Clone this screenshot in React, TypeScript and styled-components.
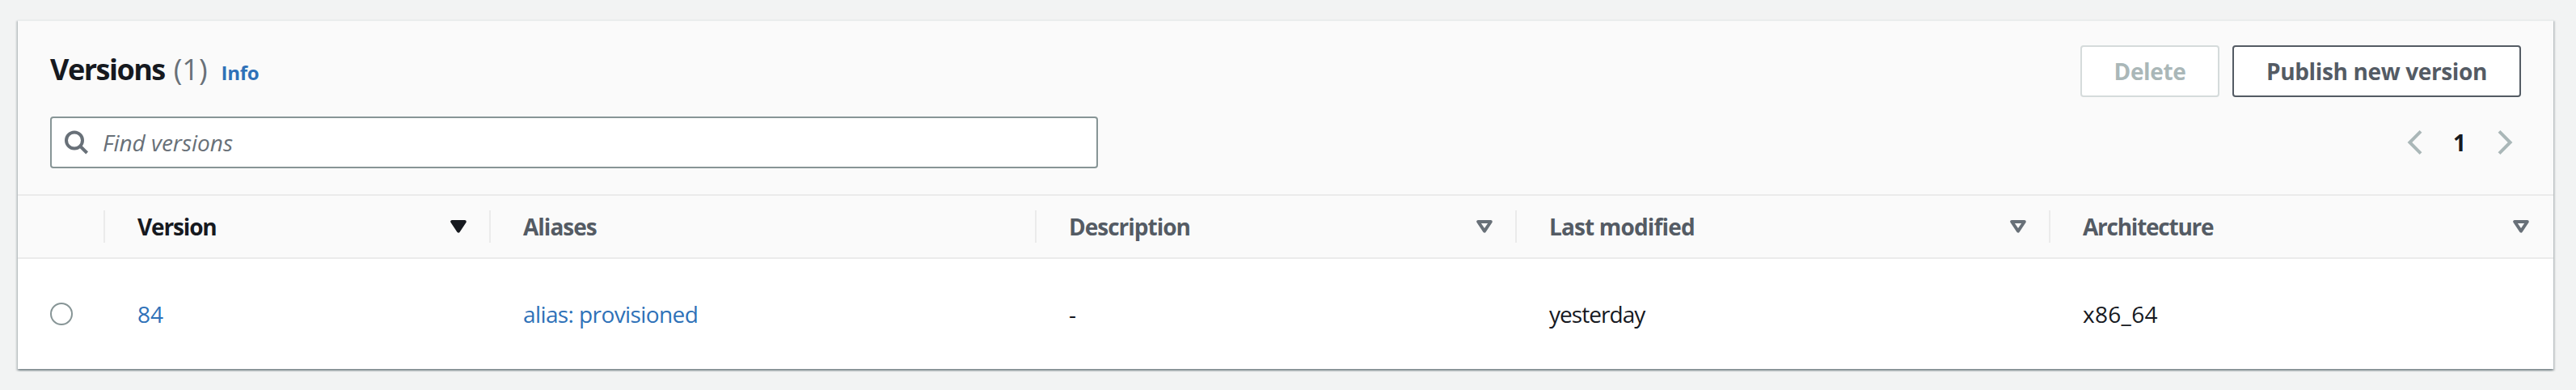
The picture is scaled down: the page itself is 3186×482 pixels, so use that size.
import React from "react";
import styled, { createGlobalStyle } from "styled-components";

const color = {
  page: "#f2f3f3",
  surface: "#ffffff",
  header: "#fafafa",
  divider: "#ebebeb",
  text: "#16191f",
  textSecondary: "#545b64",
  icon: "#687078",
  link: "#2e71b8",
  border: "#879596",
  disabled: "#aab7b8",
  disabledBorder: "#d5dbdb",
};

const GlobalStyle = createGlobalStyle`
  *, *::before, *::after { box-sizing: border-box; }
  body {
    margin: 0;
    background: ${color.page};
    color: ${color.text};
    font-family: "Open Sans", "Noto Sans", sans-serif;
    font-size: 28px;
    font-weight: 460;
    line-height: 44px;
  }
`;

const Page = styled.main`
  height: 482px;
  padding: 24px 28px 0 22px;
`;

const Panel = styled.section`
  height: 432px;
  border-top: 2px solid #eaeded;
  background: ${color.surface};
  box-shadow:
    0 2px 2px 0 rgba(0, 28, 36, 0.3),
    2px 2px 2px 0 rgba(0, 28, 36, 0.15),
    -2px 2px 2px 0 rgba(0, 28, 36, 0.15);
`;

const PanelHeader = styled.header`
  display: flex;
  flex-direction: column;
  gap: 24px;
  height: 216px;
  padding: 30px 40px 0;
  background: ${color.header};
  border-bottom: 2px solid ${color.divider};
`;

const Bar = styled.div`
  display: flex;
  align-items: center;
  justify-content: space-between;
  height: 64px;
`;

const TitleGroup = styled.div`
  display: flex;
  align-items: baseline;
`;

const Title = styled.h2`
  margin: 0;
  font-size: 36px;
  line-height: 44px;
  letter-spacing: -1.5px;
`;

const Counter = styled.span`
  margin-left: 11px;
  font-size: 36px;
  font-weight: 440;
  letter-spacing: 0;
  color: ${color.icon};
`;

const InfoLink = styled.a`
  margin-left: 17px;
  font-size: 24px;
  font-weight: 700;
  letter-spacing: -0.3px;
  color: ${color.link};
`;

const Actions = styled.div`
  display: flex;
  gap: 16px;
`;

const Button = styled.button<{ $width: number }>`
  width: ${(p) => p.$width}px;
  height: 64px;
  padding: 0 0 1px;
  border: 2px solid ${color.textSecondary};
  border-radius: 4px;
  background: ${color.surface};
  color: ${color.textSecondary};
  font: inherit;
  font-weight: 700;
  letter-spacing: -0.36px;
  white-space: nowrap;

  &:disabled {
    border-color: ${color.disabledBorder};
    color: ${color.disabled};
  }
`;

const SearchBox = styled.label`
  display: flex;
  align-items: center;
  gap: 16px;
  width: 1296px;
  height: 64px;
  padding-left: 16px;
  border: 2px solid ${color.border};
  border-radius: 4px;
  background: ${color.surface};
`;

const SearchInput = styled.input`
  flex: 1;
  height: 44px;
  padding: 0;
  border: 0;
  outline: 0;
  background: transparent;
  font: inherit;

  &::placeholder {
    color: ${color.icon};
    font-style: italic;
    opacity: 1;
  }
`;

const Pagination = styled.nav`
  display: flex;
  align-items: center;
  justify-content: space-between;
  width: 131px;
  margin-right: 10px;
`;

const PageNumber = styled.span`
  padding: 0 1px 1px 0;
  font-weight: 700;
`;

const Row = styled.div`
  display: grid;
  grid-template-columns: 108px 477px 675px 594px 660px 622px;
`;

const HeadRow = styled(Row)`
  height: 78px;
  background: ${color.header};
  border-bottom: 2px solid ${color.divider};
`;

const BodyRow = styled(Row)`
  height: 136px;
`;

const HeadCell = styled.div<{ $active?: boolean; $last?: boolean; $spacing?: number }>`
  display: flex;
  align-items: center;
  justify-content: space-between;
  height: 40px;
  margin-top: 18px;
  padding: 0 ${(p) => (p.$last ? 30 : 28)}px 0 40px;
  border-right: ${(p) => (p.$last ? "0" : `2px solid ${color.divider}`)};
  color: ${(p) => (p.$active ? color.text : color.textSecondary)};
  font-weight: 700;
  letter-spacing: ${(p) => p.$spacing ?? 0}px;
`;

const HeadLabel = styled.span`
  padding-bottom: 1px;
`;

const Cell = styled.div<{ $spacing?: number }>`
  display: flex;
  align-items: center;
  padding: 0 0 1px 40px;
  letter-spacing: ${(p) => p.$spacing ?? 0}px;
`;

const Link = styled.a`
  color: ${color.link};
`;

const Radio = styled.input`
  appearance: none;
  width: 28px;
  height: 28px;
  margin: 1px 0 0;
  border: 2px solid ${color.border};
  border-radius: 50%;
  background: ${color.surface};
`;

const Icon = styled.svg`
  display: block;
  flex: none;
`;

function SearchIcon() {
  return (
    <Icon width="31" height="31" viewBox="0 0 31 31" fill="none" stroke={color.icon} strokeWidth="4">
      <circle cx="12" cy="12.5" r="10" />
      <path d="M19 19.5 27.6 28" />
    </Icon>
  );
}

function Chevron({ direction }: { direction: "left" | "right" }) {
  return (
    <Icon width="20" height="32" viewBox="0 0 20 32" fill="none" stroke={color.disabled} strokeWidth="4">
      <path d={direction === "left" ? "M17 2.4 3.4 16 17 29.6" : "M3 2.4 16.6 16 3 29.6"} />
    </Icon>
  );
}

function SortIcon({ active }: { active?: boolean }) {
  return (
    <Icon
      width="20"
      height="16"
      viewBox="0 0 20 16"
      fill={active ? color.text : "none"}
      stroke={active ? color.text : color.icon}
      strokeWidth="4"
      strokeLinejoin="round"
    >
      <path d="M2.2 2H17.8L10 13.6Z" />
    </Icon>
  );
}

const columns = [
  { label: "Version", spacing: -1.15, sortable: true, active: true },
  { label: "Aliases", spacing: -1, sortable: false },
  { label: "Description", spacing: -1, sortable: true },
  { label: "Last modified", spacing: -0.85, sortable: true },
  { label: "Architecture", spacing: -1.25, sortable: true },
];

export default function App() {
  return (
    <>
      <GlobalStyle />
      <Page>
        <Panel>
          <PanelHeader>
            <Bar>
              <TitleGroup>
                <Title>
                  Versions<Counter>(1)</Counter>
                </Title>
                <InfoLink>Info</InfoLink>
              </TitleGroup>
              <Actions>
                <Button $width={172} disabled>
                  Delete
                </Button>
                <Button $width={357}>Publish new version</Button>
              </Actions>
            </Bar>
            <Bar>
              <SearchBox>
                <SearchIcon />
                <SearchInput placeholder="Find versions" />
              </SearchBox>
              <Pagination>
                <Chevron direction="left" />
                <PageNumber>1</PageNumber>
                <Chevron direction="right" />
              </Pagination>
            </Bar>
          </PanelHeader>
          <HeadRow>
            <HeadCell />
            {columns.map((c, i) => (
              <HeadCell key={c.label} $active={c.active} $last={i === columns.length - 1} $spacing={c.spacing}>
                <HeadLabel>{c.label}</HeadLabel>
                {c.sortable && <SortIcon active={c.active} />}
              </HeadCell>
            ))}
          </HeadRow>
          <BodyRow>
            <Cell>
              <Radio type="radio" name="version" />
            </Cell>
            <Cell>
              <Link>84</Link>
            </Cell>
            <Cell $spacing={-0.6}>
              <Link>alias: provisioned</Link>
            </Cell>
            <Cell>-</Cell>
            <Cell $spacing={-0.95}>yesterday</Cell>
            <Cell $spacing={0.3}>x86_64</Cell>
          </BodyRow>
        </Panel>
      </Page>
    </>
  );
}
